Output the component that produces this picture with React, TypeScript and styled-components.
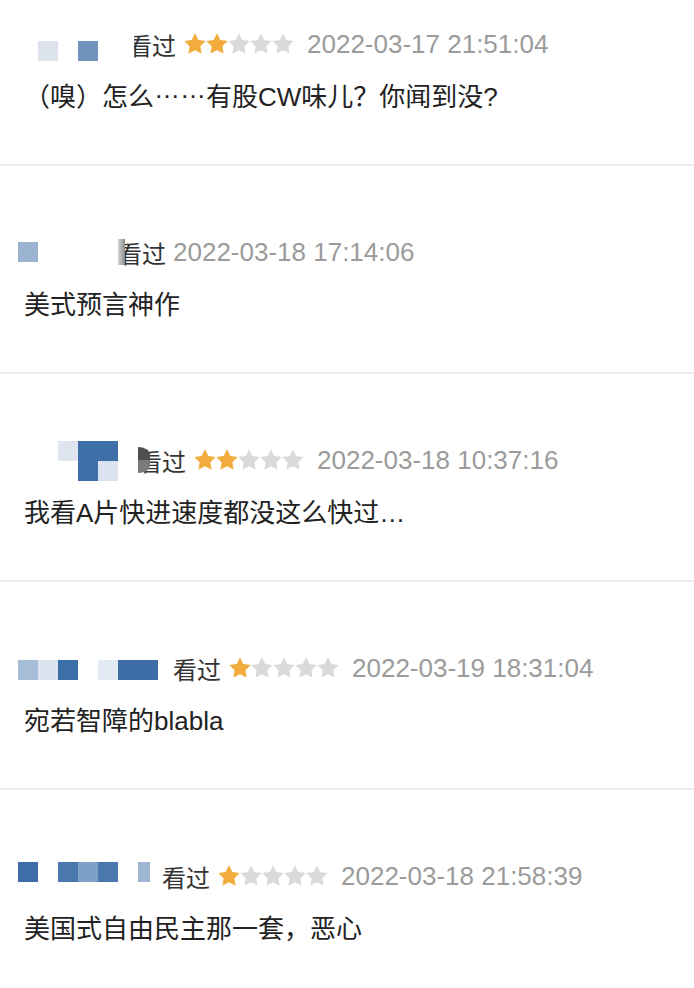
import * as React from 'react';
import styled, { createGlobalStyle } from 'styled-components';

const GlobalStyle = createGlobalStyle`
    html, body {
        margin: 0;
        padding: 0;
        background: #fff;
    }
    body {
        font-family: "Liberation Sans", "Noto Sans CJK SC", sans-serif;
        -webkit-font-smoothing: antialiased;
    }
`;

type Cell = { c: number; r: number; color: string; w?: number };
type Mask = { w: number; bg: string; round?: boolean };

interface IComment {
    cols: number;
    rows: number;
    cells: Cell[];
    dy: number;
    gap: number;
    mask?: Mask;
    rating: number;
    time: string;
    text: string;
}

const comments: IComment[] = [
    {
        cols: 5,
        rows: 1,
        cells: [
            { c: 1, r: 0, color: '#dce3ed' },
            { c: 3, r: 0, color: '#6f93bd' },
        ],
        dy: 7,
        gap: 10,
        mask: { w: 6, bg: '#fff' },
        rating: 2,
        time: '2022-03-17 21:51:04',
        text: '（嗅）怎么……有股CW味儿？你闻到没?',
    },
    {
        cols: 5,
        rows: 1,
        cells: [{ c: 0, r: 0, color: '#9ab3d1' }],
        dy: 0,
        gap: 0,
        mask: { w: 7, bg: 'linear-gradient(90deg, #d6d6d6, #8a8a8a)' },
        rating: 0,
        time: '2022-03-18 17:14:06',
        text: '美式预言神作',
    },
    {
        cols: 6,
        rows: 2,
        cells: [
            { c: 2, r: 0, color: '#dfe5ee' },
            { c: 3, r: 0, color: '#3f6fa8' },
            { c: 4, r: 0, color: '#3f6fa8' },
            { c: 3, r: 1, color: '#3f6fa8' },
            { c: 4, r: 1, color: '#dbe3ee' },
        ],
        dy: 1,
        gap: 0,
        mask: { w: 12, bg: 'linear-gradient(180deg, #4f4f4f 0 50%, #7a7a7a 50% 100%)', round: true },
        rating: 2,
        time: '2022-03-18 10:37:16',
        text: '我看A片快进速度都没这么快过…',
    },
    {
        cols: 7,
        rows: 1,
        cells: [
            { c: 0, r: 0, color: '#a6bdd7' },
            { c: 1, r: 0, color: '#dbe3ee' },
            { c: 2, r: 0, color: '#3c6ea8' },
            { c: 4, r: 0, color: '#e4eaf3' },
            { c: 5, r: 0, color: '#3d6ca6' },
            { c: 6, r: 0, color: '#3d6ca6' },
        ],
        dy: 2,
        gap: 15,
        rating: 1,
        time: '2022-03-19 18:31:04',
        text: '宛若智障的blabla',
    },
    {
        cols: 7,
        rows: 1,
        cells: [
            { c: 0, r: 0, color: '#3e6da7' },
            { c: 2, r: 0, color: '#4a78ae' },
            { c: 3, r: 0, color: '#7e9fc7' },
            { c: 4, r: 0, color: '#4b79af' },
            { c: 6, r: 0, color: '#a0b7d4', w: 12 },
        ],
        dy: -4,
        gap: 4,
        rating: 1,
        time: '2022-03-18 21:58:39',
        text: '美国式自由民主那一套，恶心',
    },
];

// the chinese "……" sits in the middle of the line, not on the baseline
function renderText(text: string) {
    const parts = text.split('……');
    return parts.map((part, i) => (
        <React.Fragment key={i}>
            {part}
            {i < parts.length - 1 && <Dots>……</Dots>}
        </React.Fragment>
    ));
}

function Stars({ value }: { value: number }) {
    return (
        <StarRow>
            {[0, 1, 2, 3, 4].map((i) => (
                <svg key={i} width="22" height="21" viewBox="0 0 24 23">
                    <path
                        d="M12 .3L15.65 7.58 23.7 8.8 17.9 14.5 19.2 22.5 12 18.8 4.8 22.5 6.1 14.5 .3 8.8 8.35 7.58Z"
                        fill={i < value ? '#f2ac3e' : '#dadada'}
                    />
                </svg>
            ))}
        </StarRow>
    );
}

function Mosaic({ cols, rows, cells, dy }: { cols: number; rows: number; cells: Cell[]; dy: number }) {
    return (
        <Grid $cols={cols} $rows={rows} $dy={dy}>
            {cells.map((cell, i) => (
                <Block key={i} $c={cell.c} $r={cell.r} $color={cell.color} $w={cell.w} />
            ))}
        </Grid>
    );
}

export default function App() {
    return (
        <>
            <GlobalStyle />
            <List>
                {comments.map((item, i) => (
                    <Item key={i} $first={i === 0} $last={i === comments.length - 1}>
                        <Header>
                            <Mosaic cols={item.cols} rows={item.rows} cells={item.cells} dy={item.dy} />
                            <Verb $gap={item.gap}>
                                {item.mask && <Cover $w={item.mask.w} $bg={item.mask.bg} $round={!!item.mask.round} />}
                                看过
                            </Verb>
                            {item.rating > 0 && <Stars value={item.rating} />}
                            <Time $near={item.rating === 0}>{item.time}</Time>
                        </Header>
                        <Body>{renderText(item.text)}</Body>
                    </Item>
                ))}
            </List>
        </>
    );
}

const List = styled.div`
    width: 694px;
    height: 988px;
    overflow: hidden;
    background: #fff;
`;

const Item = styled.div<{ $first: boolean; $last: boolean }>`
    padding: ${(p) => (p.$first ? '24px' : '66px')} 0 49px 18px;
    border-bottom: ${(p) => (p.$last ? 'none' : '2px solid #ededed')};
`;

const Header = styled.div`
    display: flex;
    align-items: center;
    height: 40px;
`;

const Grid = styled.div<{ $cols: number; $rows: number; $dy: number }>`
    display: grid;
    grid-template-columns: repeat(${(p) => p.$cols}, 20px);
    grid-template-rows: repeat(${(p) => p.$rows}, 20px);
    flex-shrink: 0;
    transform: translateY(${(p) => p.$dy}px);
`;

const Block = styled.div<{ $c: number; $r: number; $color: string; $w?: number }>`
    grid-column: ${(p) => p.$c + 1};
    grid-row: ${(p) => p.$r + 1};
    width: ${(p) => (p.$w ? `${p.$w}px` : '20px')};
    height: 20px;
    background: ${(p) => p.$color};
`;

const Verb = styled.span<{ $gap: number }>`
    position: relative;
    margin-left: ${(p) => p.$gap}px;
    font-size: 24px;
    color: #333;
    white-space: nowrap;
`;

const Cover = styled.span<{ $w: number; $bg: string; $round: boolean }>`
    position: absolute;
    left: 0;
    top: 50%;
    width: ${(p) => p.$w}px;
    height: 26px;
    transform: translateY(-50%);
    background: ${(p) => p.$bg};
    border-radius: ${(p) => (p.$round ? '0 12px 12px 0 / 0 8px 8px 0' : '0')};
`;

const StarRow = styled.div`
    display: flex;
    margin-left: 8px;
    margin-top: -2px;
`;

const Time = styled.span<{ $near: boolean }>`
    margin-left: ${(p) => (p.$near ? '7px' : '13px')};
    font-size: 26px;
    color: #9b9b9b;
    white-space: nowrap;
`;

const Body = styled.div`
    margin-top: 15px;
    padding-left: 6px;
    font-size: 26px;
    line-height: 36px;
    color: #222;
    white-space: nowrap;
`;

const Dots = styled.span`
    display: inline-block;
    transform: translateY(-8px);
    letter-spacing: 0;
`;
